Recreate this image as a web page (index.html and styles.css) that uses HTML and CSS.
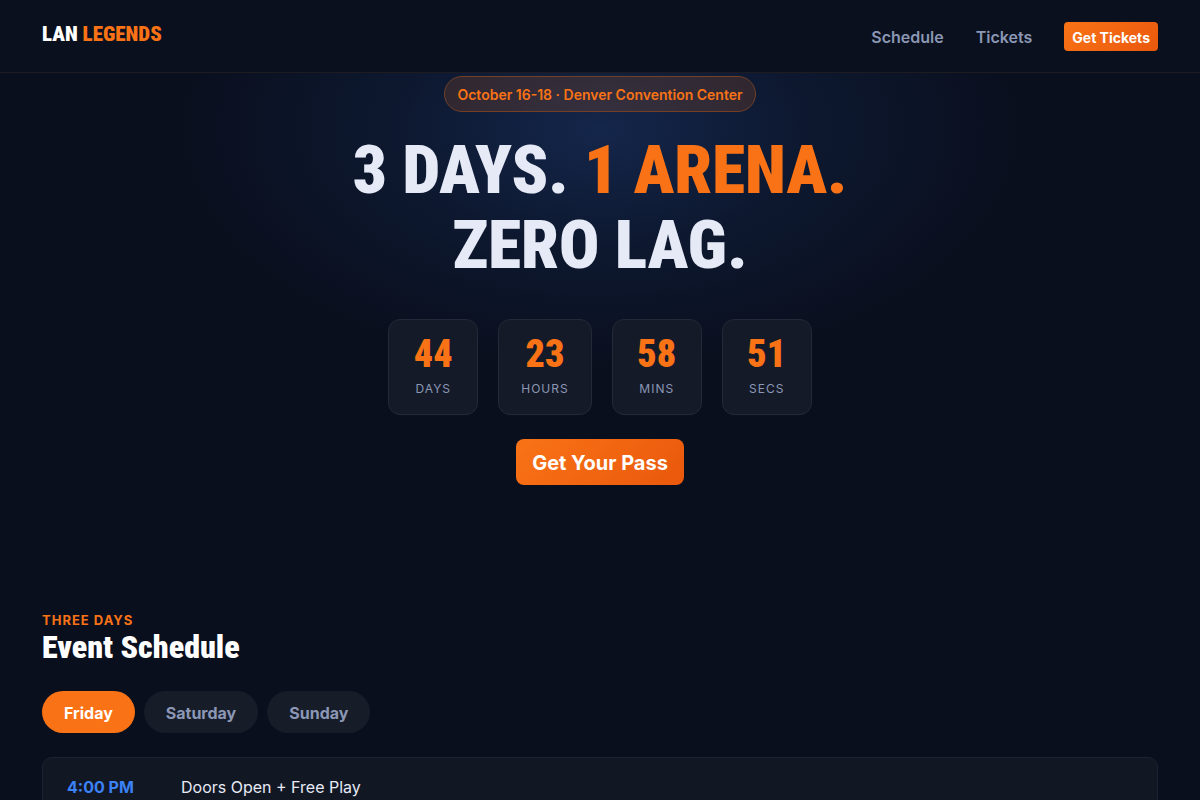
FILE: index.html
```html
<!DOCTYPE html>
<html lang="en">
<head>
<meta charset="utf-8">
<meta name="viewport" content="width=device-width, initial-scale=1">
<title>LAN Legends</title>
<link rel="stylesheet" href="styles.css">
</head>
<body>
<header class="site-header">
  <a class="logo" href="#top">LAN <span class="accent">LEGENDS</span></a>
  <nav class="nav" aria-label="Main">
    <a class="nav-link" href="#schedule">Schedule</a>
    <a class="nav-link" href="#tickets">Tickets</a>
    <a class="button button-small" href="#tickets">Get Tickets</a>
  </nav>
</header>
<main id="top">
  <section class="hero">
    <p class="badge">October 16-18 · Denver Convention Center</p>
    <h1 class="hero-title">3 DAYS. <span class="accent">1 ARENA.</span><br>ZERO LAG.</h1>
    <div class="countdown">
      <div class="unit"><span class="unit-value">44</span><span class="unit-label">DAYS</span></div>
      <div class="unit"><span class="unit-value">23</span><span class="unit-label">HOURS</span></div>
      <div class="unit"><span class="unit-value">58</span><span class="unit-label">MINS</span></div>
      <div class="unit"><span class="unit-value">51</span><span class="unit-label">SECS</span></div>
    </div>
    <a class="button button-large" href="#tickets">Get Your Pass</a>
  </section>
  <section class="schedule" id="schedule">
    <p class="eyebrow">THREE DAYS</p>
    <h2 class="section-title">Event Schedule</h2>
    <div class="tabs">
      <button class="tab tab-active" type="button">Friday</button>
      <button class="tab" type="button">Saturday</button>
      <button class="tab" type="button">Sunday</button>
    </div>
    <ul class="events">
      <li class="event"><time class="event-time" datetime="16:00">4:00 PM</time><span>Doors Open + Free Play</span></li>
    </ul>
  </section>
</main>
</body>
</html>
```
FILE: styles.css
```css
* { box-sizing: border-box; }

body {
  margin: 0;
  background: #0a0f1e;
  color: #e6eaf6;
  font-family: Inter, sans-serif;
  font-size: 16px;
  line-height: 24px;
}

html { scrollbar-width: none; }
h1, h2, p, ul { margin: 0; padding: 0; }
a { color: inherit; text-decoration: none; }
.accent { color: #f97316; }

.site-header {
  position: sticky;
  top: 0;
  z-index: 1;
  display: flex;
  align-items: center;
  justify-content: space-between;
  height: 73px;
  padding: 0 42px;
  background: #0a101e;
  border-bottom: 1px solid #1e1b21;
}

.logo, .hero-title, .section-title, .unit-value {
  font-family: "Roboto Condensed", "Liberation Sans Narrow", Roboto, sans-serif;
  font-weight: 900;
}

.logo {
  padding-bottom: 4px;
  color: #fff;
  font-size: 21px;
}

.nav { display: flex; align-items: center; gap: 32px; }
.nav-link { padding-top: 2px; color: #8b97b4; font-weight: 600; }

.button {
  background: linear-gradient(135deg, #f97316, #ea580c);
  color: #fff;
  font-weight: 700;
}
.button-small {
  padding: 5px 8px 3px;
  border-radius: 4px;
  font-size: 14px;
  line-height: 21px;
}
.button-large {
  padding: 9px 16px 7px;
  border-radius: 8px;
  font-size: 20px;
  line-height: 30px;
}

.hero {
  display: flex;
  flex-direction: column;
  align-items: center;
  padding: 3px 42px 126px;
  background: radial-gradient(ellipse 420px 240px at 50% 56px, #14264b, #0d182f 50%, #0a0f1e);
  text-align: center;
}

.badge {
  padding: 7px 12px 5px;
  border: 1px solid #733f25;
  border-radius: 18px;
  background: rgba(249, 115, 22, 0.15);
  color: #f97316;
  font-size: 14px;
  font-weight: 600;
  line-height: 22px;
}

.hero-title {
  margin: 21px 0 36px;
  font-size: 67px;
  line-height: 75px;
}

.countdown { display: flex; gap: 20px; margin-bottom: 24px; }
.unit {
  display: flex;
  flex-direction: column;
  align-items: center;
  min-width: 90px;
  padding: 14px 22px;
  border: 1px solid #242938;
  border-radius: 12px;
  background: #151a29;
}
.unit-value { color: #f97316; font-size: 38px; line-height: 40px; }
.unit-label {
  padding-top: 4px;
  color: #8b97b4;
  font-size: 12px;
  letter-spacing: 1px;
  line-height: 22px;
}

.schedule { padding: 0 42px 40px; }
.eyebrow {
  color: #f97316;
  font-size: 13px;
  font-weight: 700;
  letter-spacing: 1px;
  line-height: 18px;
}
.section-title { color: #fff; font-size: 32px; line-height: 36px; }

.tabs { display: flex; gap: 9px; margin: 26px 0 24px; }
.tab {
  padding: 10px 22px 8px;
  border: 0;
  border-radius: 21px;
  background: #171c29;
  color: #8b97b4;
  font: 700 16px/24px Inter, sans-serif;
}
.tab-active { background: #f97316; color: #fff; }

.events {
  border: 1px solid #1d2230;
  border-radius: 10px;
  background: #121724;
  list-style: none;
}
.event { display: flex; padding: 17px 24px; }
.event-time { flex: 0 0 114px; color: #3b82f6; font-weight: 700; }
```
